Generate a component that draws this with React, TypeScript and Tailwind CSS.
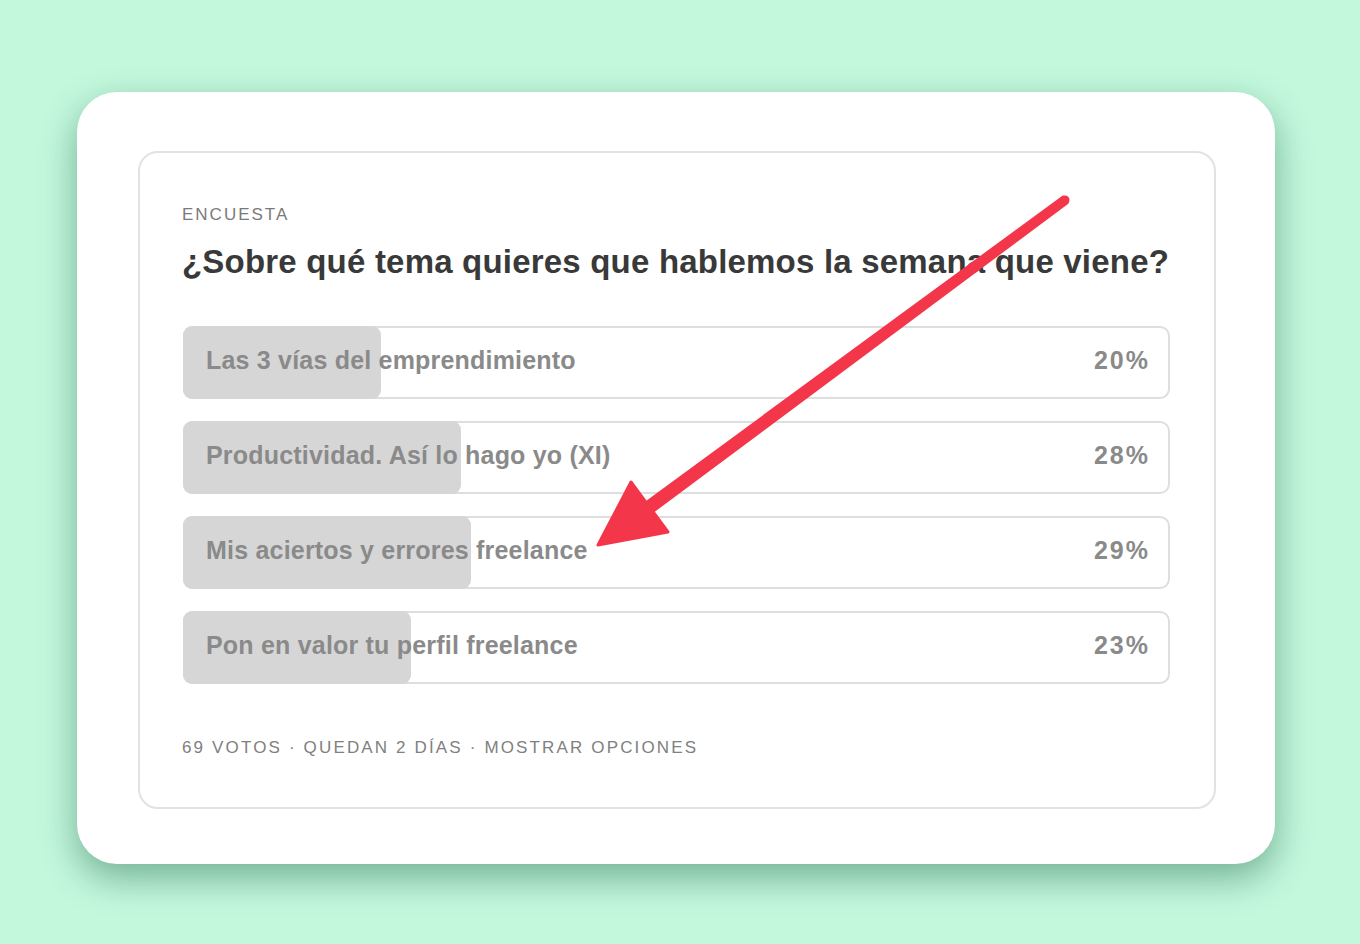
import React from "react";

const options = [
  { label: "Las 3 vías del emprendimiento", pct: 20 },
  { label: "Productividad. Así lo hago yo (XI)", pct: 28 },
  { label: "Mis aciertos y errores freelance", pct: 29 },
  { label: "Pon en valor tu perfil freelance", pct: 23 },
];

export default function App() {
  return (
    <div
      className="relative w-[1360px] h-[944px] bg-[#c3f8dd] overflow-hidden"
      style={{ fontFamily: '"Liberation Sans", Arial, sans-serif' }}
    >
      <div className="absolute left-[77px] top-[92px] w-[1198px] h-[772px] bg-white rounded-[40px] shadow-[0_14px_36px_rgba(20,90,60,0.45)] pl-[61px] pt-[59px]">
        <div className="w-[1078px] h-[658px] border-2 border-[#e2e2e2] rounded-[20px] pl-[42px] pr-[44px] flex flex-col">
          <div className="mt-[52px] text-[17px] leading-[20px] tracking-[2px] text-[#7a7a7a]">ENCUESTA</div>
          <div className="mt-[17px] text-[33px] leading-[40px] font-bold text-[#393939] tracking-[0.2px] whitespace-nowrap">
            ¿Sobre qué tema quieres que hablemos la semana que viene?
          </div>
          <div className="mt-[44px] flex flex-col gap-[22px] pl-[1px]">
            {options.map((o) => (
              <div
                key={o.label}
                className="relative h-[73px] border-2 border-[#dedede] rounded-[10px] flex items-center justify-between pl-[21px] pr-[18px]"
              >
                <div
                  className="absolute left-[-2px] top-[-2px] bottom-[-2px] bg-[#d6d6d6] rounded-[9px]"
                  style={{ width: `${Math.round(o.pct * 9.92)}px` }}
                />
                <span className="relative text-[25px] font-bold text-[#8a8a8a] leading-none tracking-[0.2px] -mt-[4px]">{o.label}</span>
                <span className="relative text-[25px] font-bold text-[#8a8a8a] leading-none tracking-[2px] -mt-[4px]">{o.pct}%</span>
              </div>
            ))}
          </div>
          <div className="mt-[54px] text-[17px] leading-[20px] tracking-[2.15px] text-[#808080] whitespace-nowrap">
            69 VOTOS · QUEDAN 2 DÍAS · MOSTRAR OPCIONES
          </div>
        </div>
      </div>
      <svg className="absolute left-0 top-0 pointer-events-none" width="1360" height="944" viewBox="0 0 1360 944">
        <polygon
          points="1062.9,197.2 646.2,502.6 631,482 598,545 668,532 652.8,511.4 1067.1,202.8"
          fill="#f4364a"
          stroke="#f4364a"
          strokeWidth="3"
          strokeLinejoin="round"
        />
        <circle cx="1065" cy="200" r="4.5" fill="#f4364a" />
      </svg>
    </div>
  );
}
